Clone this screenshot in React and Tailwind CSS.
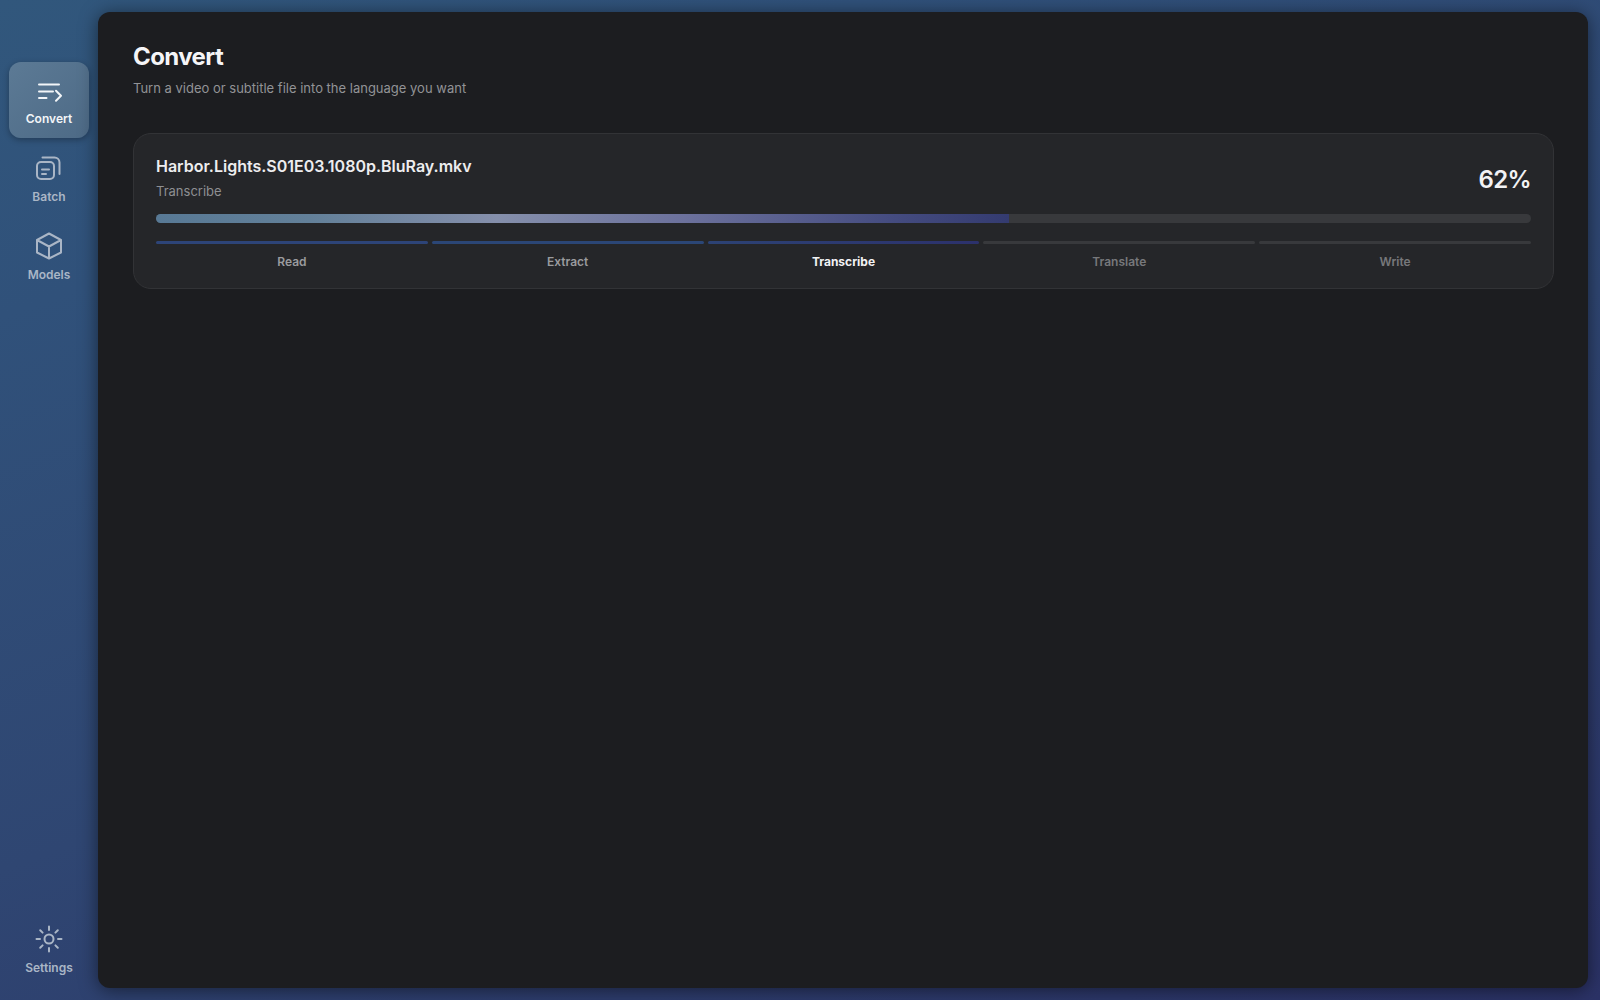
const stroke = {
  fill: "none",
  stroke: "currentColor",
  strokeWidth: 2,
  strokeLinecap: "round",
  strokeLinejoin: "round",
};

function Icon({ children }) {
  return (
    <svg viewBox="0 0 28 28" className="size-7" aria-hidden="true" {...stroke}>
      {children}
    </svg>
  );
}

const ConvertIcon = () => (
  <Icon>
    <path d="M4 8.500H24M4 15.500H18M4 22H11.500M21 14.800L26 19.800L21 24.800" />
  </Icon>
);

const BatchIcon = () => (
  <Icon>
    <rect x="2" y="8" width="17" height="17" rx="4" />
    <path d="M7.500 3.500H19.500A5 5 0 0 1 24.500 8.500V20M7 15.500H14M7 20H11" />
  </Icon>
);

const ModelsIcon = () => (
  <Icon>
    <path d="M14 1.500L26 8V20.500L14 26.500L2 20.500V8ZM2 8L14 14.500L26 8M14 14.500V26.500" />
  </Icon>
);

const SettingsIcon = () => (
  <Icon>
    <circle cx="14" cy="14" r="4.500" />
    <path d="M14 1.500V5M14 23V26.500M1.500 14H5M23 14H26.500M5.200 5.200L7.600 7.600M20.400 20.400L22.800 22.800M5.200 22.800L7.600 20.400M20.400 7.600L22.800 5.200" />
  </Icon>
);

function NavItem({ icon, label, active }) {
  return (
    <button
      type="button"
      aria-current={active ? "page" : undefined}
      className={
        "flex h-[76px] w-full flex-col items-center justify-center gap-[7px] rounded-xl pt-0.5 text-xs leading-4 font-semibold " +
        (active
          ? "bg-linear-to-br from-[#5c7a95] to-[#4d6a86] text-[#f2f5f8] shadow-[0_2px_6px_rgba(0,0,0,0.3)]"
          : "text-[#aab6c6]")
      }
    >
      {icon}
      {label}
    </button>
  );
}

const steps = [
  { name: "Read", bar: "bg-[#2d4478]", text: "font-semibold text-[#9a9b9e]" },
  { name: "Extract", bar: "bg-[#2b4676]", text: "font-semibold text-[#9a9b9e]" },
  { name: "Transcribe", bar: "bg-linear-to-r from-[#2c4274] to-[#2c316c]", text: "font-bold text-[#f2f2f4]" },
  { name: "Translate", bar: "bg-[#38393c]", text: "font-semibold text-[#77787b]" },
  { name: "Write", bar: "bg-[#38393c]", text: "font-semibold text-[#77787b]" },
];

export default function App() {
  const progress = 62;
  return (
    <div className="flex min-h-screen bg-[linear-gradient(160deg,#31577c_0%,#30517a_20%,#2f4672_55%,#2b3266_100%)] font-['Inter',sans-serif]">
      <nav aria-label="Main" className="flex w-[98px] shrink-0 flex-col gap-0.5 px-[9px] pt-[62px] pb-[13px]">
        <NavItem icon={<ConvertIcon />} label="Convert" active />
        <NavItem icon={<BatchIcon />} label="Batch" />
        <NavItem icon={<ModelsIcon />} label="Models" />
        <div className="mt-auto">
          <NavItem icon={<SettingsIcon />} label="Settings" />
        </div>
      </nav>
      <main className="my-3 mr-3 flex-1 rounded-xl bg-[#1c1d20] pt-[29px] pr-[34px] pl-[35px] shadow-[0_2px_18px_rgba(0,0,0,0.5)]">
        <h1 className="text-2xl leading-8 font-bold tracking-tight text-[#f5f5f7]">Convert</h1>
        <p className="mt-1 text-[13px] leading-[22px] text-[#929396]">
          Turn a video or subtitle file into the language you want
        </p>
        <section className="mt-[34px] rounded-[18px] border border-[#323336] bg-[#252629] px-[22px] pt-5 pb-[17px]">
          <div className="flex items-end justify-between">
            <div>
              <h2 className="text-base leading-6 font-semibold text-[#ededef]">
                Harbor.Lights.S01E03.1080p.BluRay.mkv
              </h2>
              <p className="mt-0.5 text-[13px] leading-[22px] text-[#8e8f92]">Transcribe</p>
            </div>
            <div className="text-2xl leading-[44px] font-semibold tracking-tight text-[#f2f2f4]">{progress}%</div>
          </div>
          <div
            role="progressbar"
            aria-label="Conversion progress"
            aria-valuenow={progress}
            aria-valuemin={0}
            aria-valuemax={100}
            className="mt-3 h-[9px] overflow-hidden rounded-full bg-[#38393c]"
          >
            <div
              className="h-full bg-[linear-gradient(90deg,#587995_0%,#638099_18%,#858fab_40%,#6c719c_62%,#454c80_86%,#343b70_100%)]"
              style={{ width: `${progress}%` }}
            />
          </div>
          <ol className="mt-[18px] grid grid-cols-5 gap-1">
            {steps.map((s) => (
              <li key={s.name} className="text-center">
                <div className={"h-[3px] rounded-full " + s.bar} />
                <div className={"mt-[9px] text-xs leading-[18px] " + s.text}>{s.name}</div>
              </li>
            ))}
          </ol>
        </section>
      </main>
    </div>
  );
}
